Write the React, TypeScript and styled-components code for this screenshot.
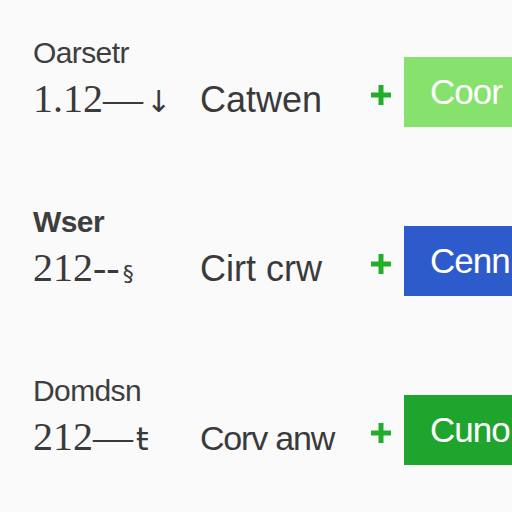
import React from "react";
import styled, { createGlobalStyle } from "styled-components";

const Global = createGlobalStyle`
  html, body {
    margin: 0;
    padding: 0;
    width: 512px;
    height: 512px;
    overflow: hidden;
    background: #fafafa;
  }
`;

const Page = styled.div`
  width: 512px;
  height: 512px;
  overflow: hidden;
  box-sizing: border-box;
  padding: 36px 0 0 33px;
  display: grid;
  grid-auto-rows: 169px;
  background: #fafafa;
`;

const Row = styled.div`
  display: grid;
  grid-template-columns: 167px 170px 34px 108px;
  grid-template-rows: 33px 40px;
  row-gap: 10px;
  align-items: baseline;
`;

const Label = styled.div<{ $bold?: boolean }>`
  grid-column: 1 / 3;
  grid-row: 1;
  font-family: "Liberation Sans", Arial, sans-serif;
  font-size: 30px;
  line-height: 33px;
  color: #3e3e3e;
  font-weight: ${(p) => (p.$bold ? 700 : 400)};
  letter-spacing: -0.6px;
`;

const Value = styled.div`
  grid-column: 1;
  grid-row: 2;
  font-family: "Liberation Serif", "Times New Roman", serif;
  font-size: 40px;
  line-height: 40px;
  color: #3a3a3a;
  white-space: nowrap;
`;

const Mark = styled.span<{ $size: number }>`
  font-family: "DejaVu Sans", sans-serif;
  font-size: ${(p) => p.$size}px;
  font-weight: 400;
  margin-left: 3px;
`;

const Name = styled.div<{ $size: number; $spacing: number }>`
  grid-column: 2;
  grid-row: 2;
  font-family: "Liberation Sans", Arial, sans-serif;
  font-size: ${(p) => p.$size}px;
  letter-spacing: ${(p) => p.$spacing}px;
  line-height: 40px;
  color: #3a3a3a;
  white-space: nowrap;
`;

const PlusCell = styled.div`
  grid-column: 3;
  grid-row: 2;
  align-self: start;
  margin-top: 4px;
  width: 22px;
  height: 24px;
`;

const Button = styled.div<{ $bg: string }>`
  grid-column: 4;
  grid-row: 1 / 3;
  align-self: start;
  margin-top: 21px;
  height: 70px;
  width: 108px;
  box-sizing: border-box;
  padding-left: 26px;
  background: ${(p) => p.$bg};
  color: #ffffff;
  display: flex;
  align-items: center;
  font-family: "Liberation Sans", Arial, sans-serif;
  font-size: 35px;
  letter-spacing: -1px;
  white-space: nowrap;
  overflow: hidden;
`;

const Plus = () => (
  <svg width="22" height="24" viewBox="0 0 22 24">
    <rect x="8.5" y="2" width="5" height="20" fill="#22ad2a" />
    <rect x="1" y="9.5" width="20" height="5" fill="#22ad2a" />
  </svg>
);

const rows = [
  { label: "Oarsetr", bold: false, value: "1.12—", mark: "↓", markSize: 30, name: "Catwen", nameSize: 36, nameSpacing: 0, btn: "Coor", bg: "#87e16d" },
  { label: "Wser", bold: true, value: "212--", mark: "§", markSize: 22, name: "Cirt crw", nameSize: 36, nameSpacing: 0, btn: "Cenn", bg: "#2e5bcb" },
  { label: "Domdsn", bold: false, value: "212—", mark: "ŧ", markSize: 32, name: "Corv anw", nameSize: 34, nameSpacing: -1.2, btn: "Cuno", bg: "#1fa52e" },
];

export default function App() {
  return (
    <>
      <Global />
      <Page>
        {rows.map((r) => (
          <Row key={r.label}>
            <Label $bold={r.bold}>{r.label}</Label>
            <Value>
              {r.value}
              <Mark $size={r.markSize}>{r.mark}</Mark>
            </Value>
            <Name $size={r.nameSize} $spacing={r.nameSpacing}>
              {r.name}
            </Name>
            <PlusCell>
              <Plus />
            </PlusCell>
            <Button $bg={r.bg}>{r.btn}</Button>
          </Row>
        ))}
      </Page>
    </>
  );
}
